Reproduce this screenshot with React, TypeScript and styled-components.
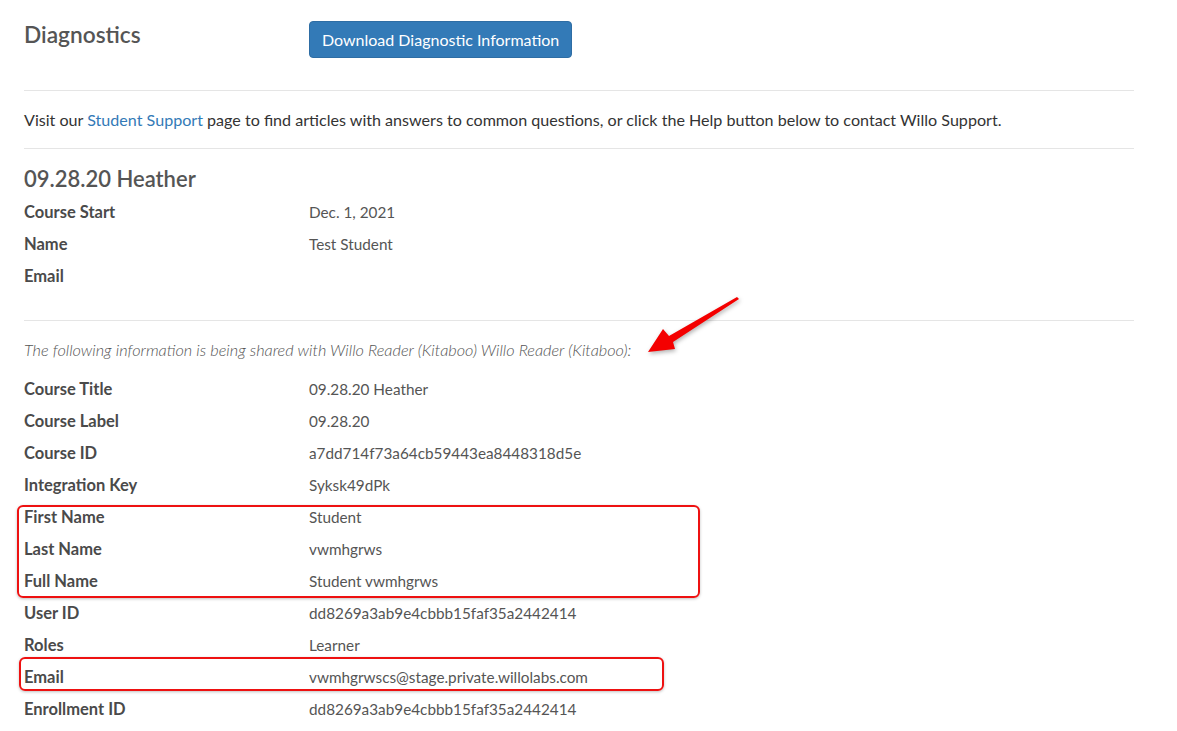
import React from 'react';
import styled, { createGlobalStyle } from 'styled-components';

const GlobalStyle = createGlobalStyle`
  html, body {
    margin: 0;
    background: #fff;
  }
  body {
    font-family: "Segoe UI", Lato, "Noto Sans", sans-serif;
    color: #333;
  }
`;

const Page = styled.div`
  position: relative;
  width: 1110px;
  padding: 0 0 0 24px;
`;

const Header = styled.header`
  display: grid;
  grid-template-columns: 285px auto;
  align-items: start;
  padding-top: 21px;
  padding-bottom: 32px;
  border-bottom: 1px solid #e5e5e5;
`;

const Title = styled.h1`
  margin: 0;
  font-size: 22.7px;
  font-weight: 600;
  color: #555;
  line-height: 28px;
`;

const DownloadButton = styled.button`
  justify-self: start;
  height: 37px;
  padding: 0 12px;
  background: #337ab7;
  border: 1px solid #2e6da4;
  border-radius: 4px;
  color: #fff;
  font-family: inherit;
  font-size: 16px;
`;

const Intro = styled.p`
  margin: 0;
  padding: 18px 0;
  font-size: 16.1px;
  line-height: 21px;
  color: #333;
  border-bottom: 1px solid #e5e5e5;
  > a {
    color: #337ab7;
    text-decoration: none;
  }
`;

const CourseName = styled.h2`
  margin: 15px 0 2px;
  font-size: 22px;
  font-weight: 600;
  line-height: 30px;
  color: #555;
`;

const InfoList = styled.dl`
  margin: 0;
  display: grid;
  grid-template-columns: 285px 1fr;
  grid-auto-rows: 32px;
  align-items: center;
  > dt {
    font-weight: 700;
    font-size: 16.5px;
    color: #4a4a4a;
  }
  > dd {
    margin: 0;
    font-size: 15.3px;
    color: #555;
  }
`;

const Divider = styled.hr`
  margin: 28px 0 0;
  border: none;
  border-top: 1px solid #e5e5e5;
`;

const SharedNote = styled.p`
  margin: 19px 0 13px;
  font-size: 16.3px;
  line-height: 20px;
  font-style: italic;
  font-weight: 300;
  color: #555;
`;

const Overlay = styled.div<{ $left: number; $top: number; $width: number; $height: number }>`
  position: absolute;
  left: ${p => p.$left}px;
  top: ${p => p.$top}px;
  width: ${p => p.$width}px;
  height: ${p => p.$height}px;
  border: 2px solid #ee1111;
  border-radius: 6px;
  box-sizing: border-box;
  box-shadow: 0 1px 3px rgba(0, 0, 0, 0.25);
  pointer-events: none;
`;

const Arrow = styled.svg`
  position: absolute;
  left: 640px;
  top: 290px;
  filter: drop-shadow(1px 2px 2px rgba(0, 0, 0, 0.3));
`;

const courseRows: [string, string][] = [
  ['Course Start', 'Dec. 1, 2021'],
  ['Name', 'Test Student'],
  ['Email', ''],
];

const sharedRows: [string, string][] = [
  ['Course Title', '09.28.20 Heather'],
  ['Course Label', '09.28.20'],
  ['Course ID', 'a7dd714f73a64cb59443ea8448318d5e'],
  ['Integration Key', 'Syksk49dPk'],
  ['First Name', 'Student'],
  ['Last Name', 'vwmhgrws'],
  ['Full Name', 'Student vwmhgrws'],
  ['User ID', 'dd8269a3ab9e4cbbb15faf35a2442414'],
  ['Roles', 'Learner'],
  ['Email', 'vwmhgrwscs@stage.private.willolabs.com'],
  ['Enrollment ID', 'dd8269a3ab9e4cbbb15faf35a2442414'],
];

function Rows({ rows }: { rows: [string, string][] }) {
  return (
    <>
      {rows.map(([label, value], i) => (
        <React.Fragment key={label + i}>
          <dt>{label}</dt>
          <dd>{value}</dd>
        </React.Fragment>
      ))}
    </>
  );
}

export default function App() {
  return (
    <Page>
      <GlobalStyle />
      <Header>
        <Title>Diagnostics</Title>
        <DownloadButton>Download Diagnostic Information</DownloadButton>
      </Header>

      <Intro>
        Visit our <a href="#">Student Support</a> page to find articles with answers to common
        questions, or click the Help button below to contact Willo Support.
      </Intro>

      <CourseName>09.28.20 Heather</CourseName>
      <InfoList>
        <Rows rows={courseRows} />
      </InfoList>

      <Divider />
      <SharedNote>
        The following information is being shared with Willo Reader (Kitaboo) Willo Reader (Kitaboo):
      </SharedNote>
      <InfoList>
        <Rows rows={sharedRows} />
      </InfoList>

      {/* annotation marks drawn over the screenshot */}
      <Overlay $left={17} $top={505} $width={683} $height={93} />
      <Overlay $left={19} $top={657} $width={645} $height={34} />

      <Arrow width="110" height="70" viewBox="0 0 110 70">
        <path d="M97 7 L99 9 L33 52 L35 59 L8 62 L23 39 L29 46 Z" fill="#f40000" />
      </Arrow>
    </Page>
  );
}
